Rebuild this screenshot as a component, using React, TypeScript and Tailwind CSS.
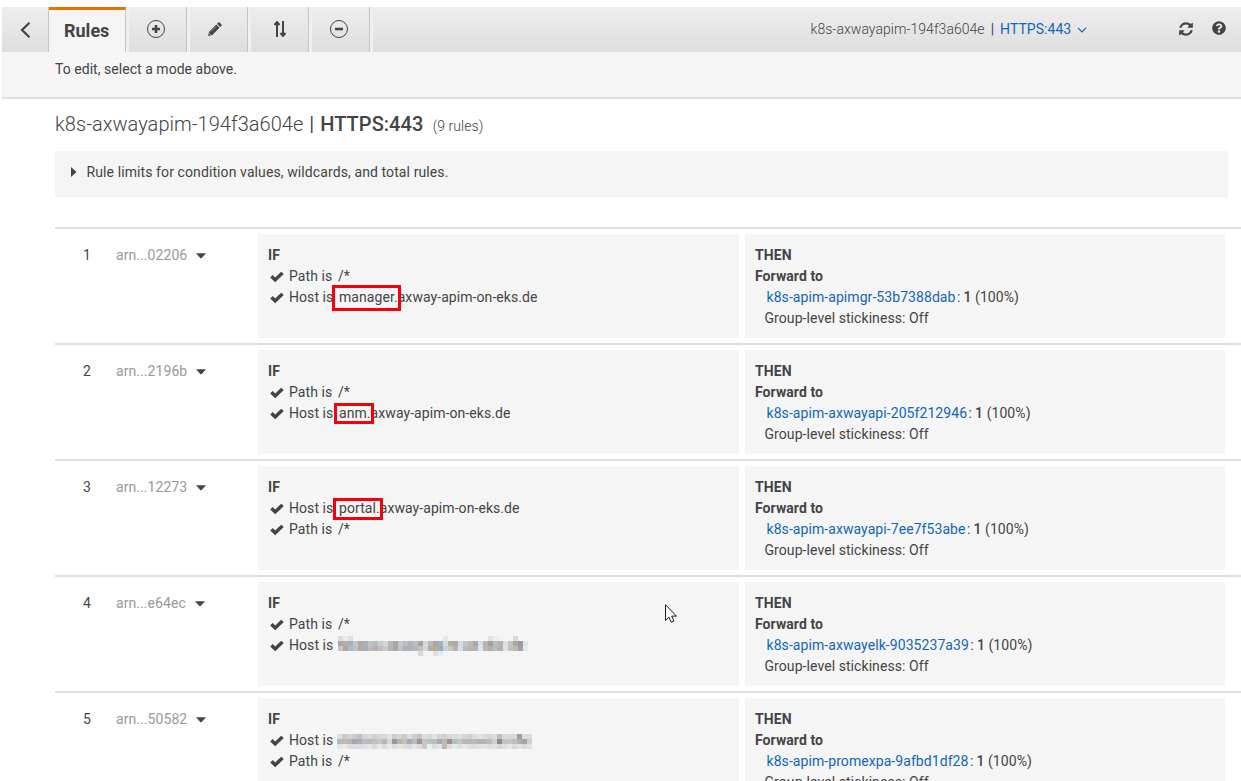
import React from "react";
import { FaQuestionCircle } from "react-icons/fa";

type Condition = { label: string; value: string; mark?: string; mosaic?: string[][]; mosaicClass?: string };
type Rule = { n: number; arn: string; conditions: Condition[]; target: string };

const mosaicA = [
  ["#dcdcdc", "#ecece8", "#dce2e2", "", "", "", "", "", "", "", "", "", "", "", "", "", "", "", "", "", "", "#e6e6e6", "", "", "", "", "", "", "", "", "#e9e0de", "#e7f0f2", "", "", "", "#dcdcdc", "", ""],
  ["#b0a9a3", "#b5aea6", "#a9adb8", "#c3c6ca", "#b3aaa1", "#a9b3b8", "#c0c4c8", "#bdb9b6", "#bdd0dc", "#d9d5d2", "#b3b8bb", "#aaa6a4", "#c1c8d1", "#c2b9b0", "#b0b4bc", "#b7c0c6", "#aaa39e", "#d2dce3", "#beb8b4", "#aaa59d", "#a9b0ba", "#d1dbe3", "#b5ada3", "#ada6a1", "#d0dbe6", "#c8c4c0", "#bfb7b2", "#aba7a4", "#d3dce6", "#b9b3af", "#a39e9b", "#b1bfc3", "#b9b2a9", "#d7dfe9", "#c4c4c2", "#a9a7a6", "#9b9895", "#dfe6ee"],
  ["#c9c5c0", "#aea7a0", "#b0bac6", "#bcbfc3", "#b4aaa2", "#9fb1bf", "#bdbdbd", "#b8b1ad", "#c0bfbd", "#c8cbce", "#aeb7ba", "#aaa6a7", "#bec2c8", "#aeb0b3", "#acb1b9", "#b1b7bd", "#c5c3c1", "#d0d6db", "#b2aca8", "#b5aca0", "#a2abb5", "#c5d2de", "#cbc6b8", "#b9afb6", "#d3e0eb", "#b9b9b9", "#bcb3ae", "#b3b4b2", "#dce5ef", "#bab7b5", "#b1ada7", "#afbdc1", "#b4b1ad", "#dce3eb", "#c5c3c0", "#bbbbba", "#a59f9b", "#e3ebf2"],
  ["", "", "", "", "", "", "", "", "", "", "", "", "", "", "", "", "#d9d9d9", "", "", "#e2ddd6", "#e3edf4", "", "", "", "", "", "", "", "", "", "", "", "", "", "", "", "", ""],
];
const mosaicB = [
  ["#dcdfe0", "#c9cccb", "#d6d3cf", "#c8cdd0", "#bcc0c4", "#d5d5d5", "#dadada", "#ced0ce", "#d3d9dc", "#d3d8da", "#ebe3db", "#c8ced1", "#d0d7da", "#cccccc", "#d8dddf", "#cccccc", "#c2c3c4", "#dddddd", "#d7d7d5", "#e5e3df", "#d5d5d3", "#cdcfd0", "#d4d9dd", "#dbdbdb", "#dde0e0", "#d0d8dd", "#ced0cd", "#dddddd", "#e3e3e3", "#dfdcda", "#d2d7d9", "#dbdbdb", "#c5bfba", "#d7dcde", "#d5d8db", "#d9d9d7", "#9ba2a6", "#dcdee0", "#d9dcdf"],
  ["#bab9b8", "#b9b9b9", "#c2b3a7", "#a8a5a4", "#a9b0b5", "#bbbbbb", "#b9b9b9", "#bec0c0", "#c4c6c7", "#bab7b4", "#ddd6d0", "#929ba5", "#bab5af", "#c5bfb7", "#a4abb2", "#b9bcbf", "#9c9494", "#c2c4c5", "#bcc1c5", "#b6bec3", "#a9acae", "#c0b9b3", "#9d9092", "#b2c0bd", "#c3c7c7", "#b9b6b4", "#b8b8b8", "#bababa", "#b5b2ad", "#b8b3ad", "#b8bdbe", "#d0d0ce", "#938a85", "#c0c3c5", "#c4c5c5", "#bcc0c2", "#b6aeaa", "#a9a49c", "#d0d0d0"],
  ["#e4e4e4", "#eceae9", "#dedfe2", "#dddddd", "#dfdfdf", "#dce2e5", "#e6e6e6", "#dddad9", "#e9e9e9", "#dcdcdc", "#e7e7e7", "#dddcdf", "#e6e6e6", "#e1ded9", "#dcdcdc", "#e4e8ea", "#dcdcdc", "#c9c9c7", "#e5f0f4", "#dcdcdc", "#e4e4e4", "#c2b7b3", "#dfdedc", "#e0eeee", "#e0e0e0", "#ebe9e6", "#dedee3", "#dddddd", "#e1e1e1", "#e7e2df", "#dddddd", "#e2e2e2", "#d9d6d6", "#e0e0e0", "#e9e6e3", "#d9d9d9", "#e3e3e3", "#dcdcdc", "#e1e1e1"],
];

const rules: Rule[] = [
  { n: 1, arn: "arn...02206", target: "k8s-apim-apimgr-53b7388dab", conditions: [{ label: "Path is", value: "/*" }, { label: "Host is", value: "manager.axway-apim-on-eks.de", mark: "-left-[7px] -top-[2px] h-[26px] w-[69px]" }] },
  { n: 2, arn: "arn...2196b", target: "k8s-apim-axwayapi-205f212946", conditions: [{ label: "Path is", value: "/*" }, { label: "Host is", value: "anm.axway-apim-on-eks.de", mark: "-left-[5px] top-0 h-[21px] w-[40px]" }] },
  { n: 3, arn: "arn...12273", target: "k8s-apim-axwayapi-7ee7f53abe", conditions: [{ label: "Host is", value: "portal.axway-apim-on-eks.de", mark: "-left-[6px] top-0 h-[22px] w-[50px]" }, { label: "Path is", value: "/*" }] },
  { n: 4, arn: "arn...e64ec", target: "k8s-apim-axwayelk-9035237a39", conditions: [{ label: "Path is", value: "/*" }, { label: "Host is", value: "", mosaic: mosaicA, mosaicClass: "-ml-px mt-[1px]" }] },
  { n: 5, arn: "arn...50582", target: "k8s-apim-promexpa-9afbd1df28", conditions: [{ label: "Host is", value: "", mosaic: mosaicB, mosaicClass: "-ml-[2px] mt-[4px]" }, { label: "Path is", value: "/*" }] },
];

function Check() {
  return (
    <svg className="mt-[5px] h-3 w-[14px] shrink-0" viewBox="0 0 14 12" fill="#444">
      <path d="M0.2 6.5 2.7 4.1 5.2 6.5 11.2 0.7 13.8 3.1 5.2 11.3Z" />
    </svg>
  );
}

function Mosaic({ cells, className = "" }: { cells: string[][]; className?: string }) {
  return (
    <div className={className}>
      {cells.map((row, y) => (
        <div key={y} className="flex h-[5px]">
          {row.map((c, x) => <span key={x} className="h-[5px] w-[5px]" style={{ backgroundColor: c || undefined }} />)}
        </div>
      ))}
    </div>
  );
}

function RuleRow({ rule }: { rule: Rule }) {
  return (
    <section className="flex h-[116px] shrink-0 border-t-2 border-[#dedede] pt-[5px] leading-[21px] tracking-[0.07px]">
      <div className="w-[61px] pt-[11px] pl-7">{rule.n}</div>
      <div className="flex w-[142px] pt-[11px] text-[#999]">
        {rule.arn}
        <svg className="mt-2 ml-[9px] h-[6px] w-[10px]" viewBox="0 0 10 6" fill="#444"><path d="M0 0.3H10L5.7 5Q5 5.7 4.3 5Z" /></svg>
      </div>
      <div className="mr-[6px] h-[104px] w-[481px] bg-[#f5f5f5] pt-[11px] pl-[10px]">
        <div className="font-bold">IF</div>
        {rule.conditions.map((c) => (
          <div key={c.label} className="flex h-[21px]">
            <span className="ml-[2px]"><Check /></span>
            <span className="ml-[5px] w-[50px] whitespace-nowrap">{c.label}</span>
            {c.mosaic ? <Mosaic cells={c.mosaic} className={c.mosaicClass} /> : (
              <span className={c.mark ? "relative whitespace-nowrap" : "-ml-px"}>
                {c.value}
                {c.mark && <span className={`absolute border-[3px] border-[#f50008] ${c.mark}`} />}
              </span>
            )}
          </div>
        ))}
      </div>
      <div className="h-[104px] w-[480px] bg-[#f5f5f5] pt-[11px] pl-[10px]">
        <div className="font-bold">THEN</div>
        <div className="font-bold">Forward to</div>
        <div className="pl-[11.5px]"><span className="text-[#1166bb]">{rule.target}</span><span className="ml-[1.5px] tracking-[-0.2px]">: </span><b className="font-medium">1</b> (100%)</div>
        <div className="pl-[9.5px]">Group-level stickiness: Off</div>
      </div>
    </section>
  );
}

function ToolButton({ children, className = "pr-[4px]" }: { children: React.ReactNode; className?: string }) {
  return (
    <button className="flex h-[45px] w-[61px] border-r border-[#c4c4c4] bg-[#f0f0f0] pl-[3px]">
      <span className={`flex h-full flex-1 items-center justify-center bg-gradient-to-b from-[#eee] to-[#dedede] pb-[2px] ${className}`}>{children}</span>
    </button>
  );
}

export default function App() {
  return (
    <div className="relative flex h-[781px] w-[1241px] flex-col overflow-hidden bg-white pt-[7px] font-['Roboto',sans-serif] text-[14px] text-[#444]">
      <header className="ml-[2px] h-[91px] shrink-0 border-b border-[#d9d9d9] bg-[#f5f5f5] shadow-[0_1px_1px_#e8e8e8]">
        <div className="flex h-[45px] bg-gradient-to-b from-[#eee] to-[#dedede]">
          <button className="flex w-[47px] items-center justify-center border-r border-[#c4c4c4]">
            <svg className="h-4 w-[11px]" viewBox="0 0 11 16" fill="none" stroke="#444" strokeWidth="2.2"><path d="M9.5 .8 2 8l7.5 7.2" /></svg>
          </button>
          <div className="w-[77px] border-t-[3px] border-r border-t-[#e07700] border-r-[#c4c4c4] bg-[#f5f5f5] pt-[7px] pl-[15px] text-[18px] leading-7 font-bold">Rules</div>
          <ToolButton>
            <svg className="h-5 w-5" viewBox="0 0 20 20" fill="none" stroke="#444"><circle cx="10" cy="10" r="8.5" /><path strokeWidth="2.6" d="M6 10h8M10 6v8" /></svg>
          </ToolButton>
          <ToolButton className="pr-[8px]">
            <svg className="h-[14px] w-[14px]" viewBox="0 0 14 14" fill="#444"><path d="M0 14 1.1 9.7 8.3 2.5 11.5 5.7 4.3 12.9ZM9 1.8 10.3.5Q10.9 0 11.5.5L13.5 2.5Q14 3.1 13.5 3.7L12.2 5Z" /><path d="m2.8 9.6 5.5-5.5" stroke="#e6e6e6" strokeWidth=".5" /><path d="m1.2 11.3 1.5 1.5" stroke="#e6e6e6" strokeWidth=".7" /></svg>
          </ToolButton>
          <ToolButton className="pr-0">
            <svg className="h-4 w-3" viewBox="0 0 12 16" fill="none" stroke="#444" strokeWidth="2"><path d="M3 16V2M.5 4 3 1l2.5 3M9 0v14M6.5 12 9 15l2.5-3" /></svg>
          </ToolButton>
          <ToolButton>
            <svg className="h-5 w-5" viewBox="0 0 20 20" fill="none" stroke="#444"><circle cx="10" cy="10" r="8.5" /><path strokeWidth="2.6" d="M6 10h8" /></svg>
          </ToolButton>
          <div className="flex flex-1 items-center border-l-[3px] border-[#f0f0f0] pb-[2px]">
            <div className="ml-[437.5px] flex w-[367.5px] shrink-0 items-center pt-[2px] tracking-[0.04px] whitespace-nowrap">
              <span className="font-light">k8s-axwayapim-194f3a604e</span><span className="mx-[6px]">|</span><span className="text-[#1166bb]">HTTPS:443</span>
              <svg className="ml-[6px] h-[6px] w-[10px]" viewBox="0 0 10 6" fill="none" stroke="#1166bb" strokeWidth="1.2"><path d="m1 .8 4 4 4-4" /></svg>
            </div>
            <svg className="h-4 w-4 shrink-0" viewBox="0 0 1792 1792" fill="#444"><path d="M1639 1056q0 5-1 7-64 268-268 434.5t-478 166.5q-146 0-282.5-55t-243.5-157l-129 129q-19 19-45 19t-45-19-19-45v-448q0-26 19-45t45-19h448q26 0 45 19t19 45-19 45l-137 137q71 66 161 102t187 36q134 0 250-65t186-179q11-17 53-117 8-23 30-23h192q13 0 22.5 9.5t9.5 22.5zm25-800v448q0 26-19 45t-45 19h-448q-26 0-45-19t-19-45 19-45l138-138q-148-137-349-137-134 0-250 65t-186 179q-11 17-53 117-8 23-30 23h-199q-13 0-22.5-9.5t-9.5-22.5v-7q65-268 270-434.5t480-166.5q146 0 284 55.5t245 156.5l130-129q19-19 45-19t45 19 19 45z" /></svg>
            <FaQuestionCircle className="mb-px ml-[18px] shrink-0" size={14} />
          </div>
        </div>
        <p className="pt-[7px] pl-[53px] leading-5 tracking-[0.04px]">To edit, select a mode above.</p>
      </header>
      <main className="flex flex-1 flex-col pl-[55px]">
        <h1 className="mt-[12px] flex items-baseline text-[20px] leading-7 tracking-[0.04px] whitespace-nowrap">
          <span className="font-light">k8s-axwayapim-194f3a604e</span><span className="mx-[6px]">|</span><span className="font-medium">HTTPS:443</span><span className="ml-[9.5px] text-[14px] font-light">(9 rules)</span>
        </h1>
        <div className="mt-[11px] mb-[30px] flex h-[46px] w-[1173px] shrink-0 items-center bg-[#f5f5f5] pb-1 pl-4 tracking-[0.1px]">
          <svg className="mr-[9.5px] h-[10px] w-[6px]" viewBox="0 0 6 10" fill="#444"><path d="M0 0 5.5 5 0 10Z" /></svg>
          Rule limits for condition values, wildcards, and total rules.
        </div>
        {rules.map((rule) => <RuleRow key={rule.n} rule={rule} />)}
      </main>
      <svg className="absolute top-[604px] left-[665px] h-[19px] w-[12px]" viewBox="0 0 12 19" fill="white" stroke="#111827"><path d="M.5.7v15.8l3.5-3.4 2.2 5.1 2.7-1.1-2.2-5h4.7Z" /></svg>
    </div>
  );
}
